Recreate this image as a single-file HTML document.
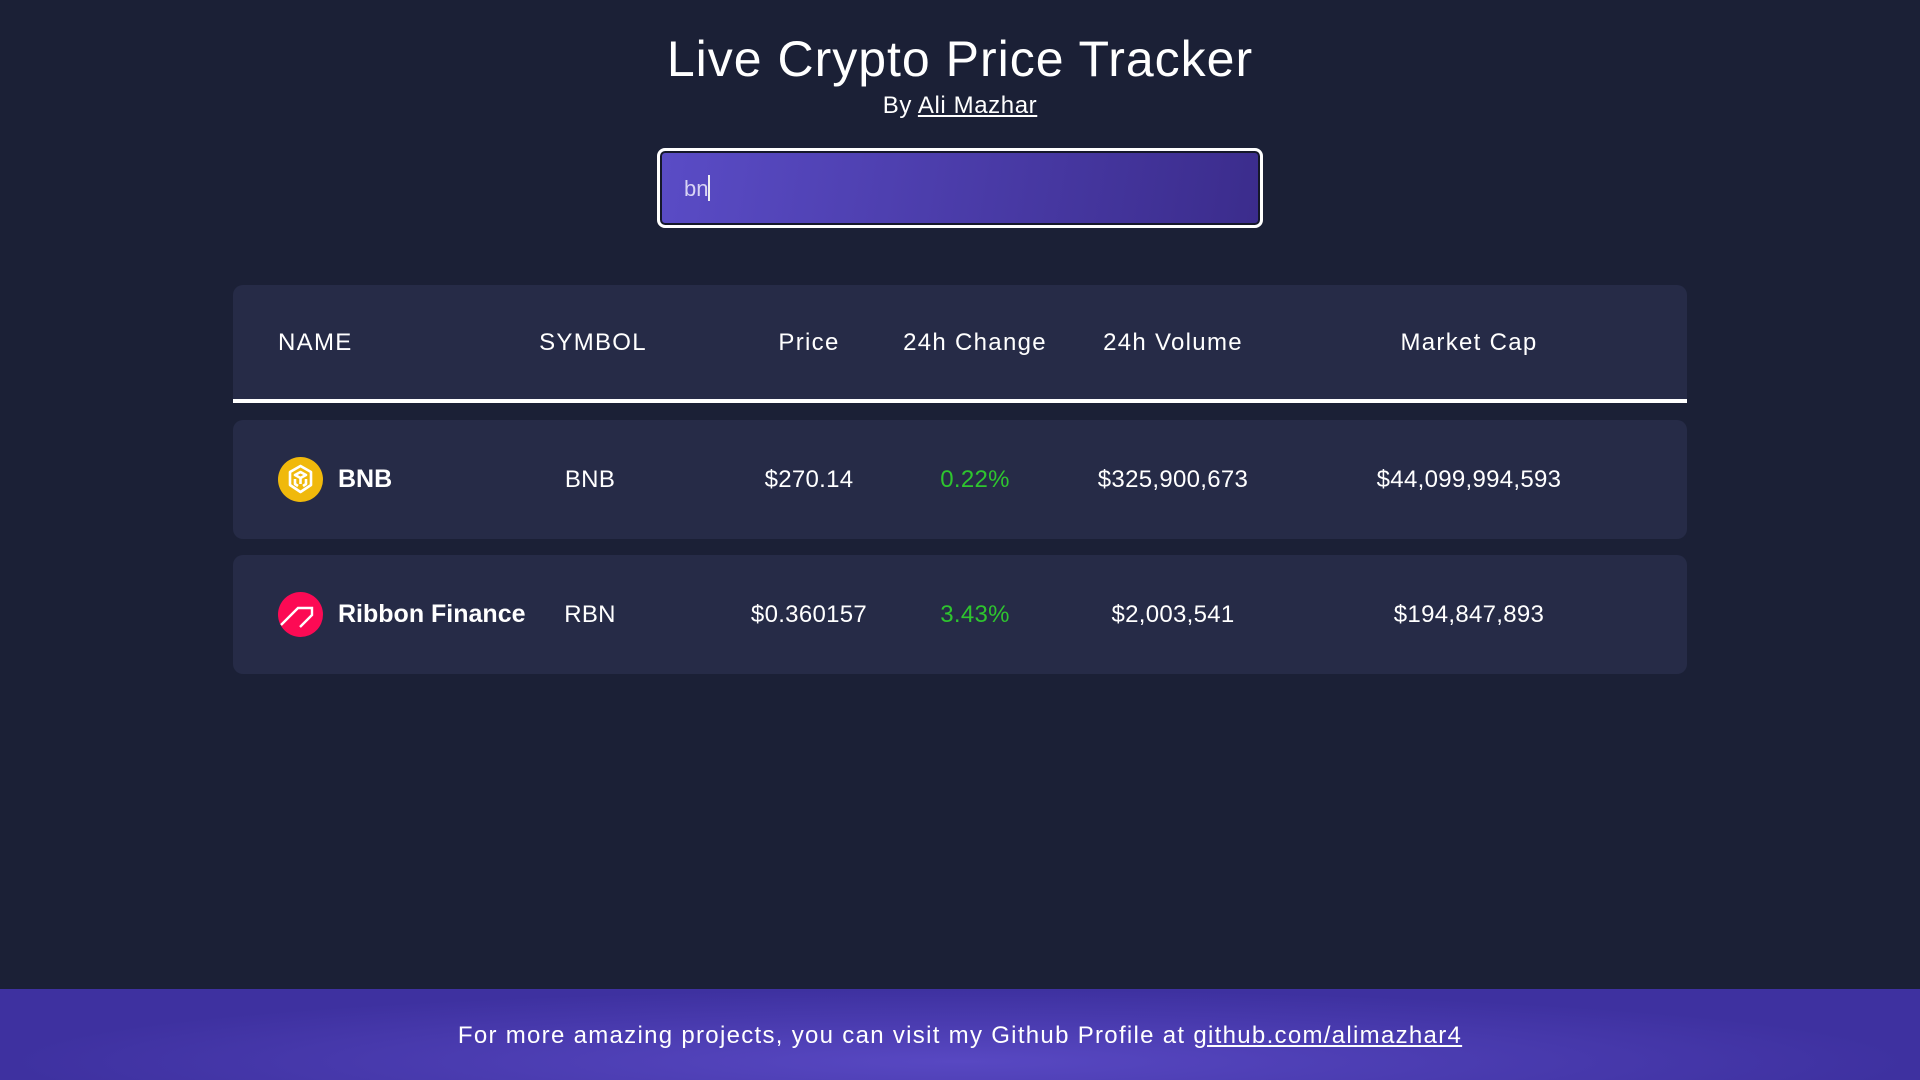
<!DOCTYPE html>
<html><head><meta charset="utf-8"><style>
*{margin:0;padding:0;box-sizing:border-box}
body{width:1920px;height:1080px;background:#1b2036;color:#fff;font-family:"Liberation Sans",sans-serif;position:relative;overflow:hidden}
h1{position:absolute;top:30px;width:100%;text-align:center;font-size:50px;font-weight:400;letter-spacing:1px}
.by{position:absolute;top:92px;width:100%;text-align:center;font-size:24px;letter-spacing:0.6px}
.by u{text-decoration:underline}
.inp{position:absolute;left:657px;top:148px;width:606px;height:80px;border:3px solid #fff;border-radius:8px;box-shadow:inset 0 0 0 2px #15182a;background:linear-gradient(100deg,#5a4cc6,#3b2c8c);}
.inp span{position:absolute;left:24px;top:24px;font-size:22px;color:#d8d4f4}
.inp span::after{content:"";display:inline-block;width:2px;height:26px;background:#eee;vertical-align:-5px}
.hdr{position:absolute;left:233px;top:285px;width:1454px;height:118px;background:#262b47;border-radius:10px 10px 0 0;border-bottom:4px solid #fff}
.row{position:absolute;left:233px;width:1454px;height:119px;background:#262b47;border-radius:10px}
.c{position:absolute;font-size:24px;white-space:nowrap;transform:translateX(-50%)}
.hdr .c{top:44px;letter-spacing:1.3px}
.row .c{top:46px;letter-spacing:0.3px}
.nm{position:absolute;left:105px;top:45px;font-size:25px;font-weight:700}
.ic{position:absolute;left:45px;top:37px;width:45px;height:45px;border-radius:50%}
.g{color:#2ec52e}
.foot{position:absolute;left:0;top:989px;width:1920px;height:91px;background:radial-gradient(ellipse at 50% 80%,#5848c2,#3e31a0 70%);text-align:center;font-size:24px;padding-top:33px;letter-spacing:1.3px}
</style></head><body>
<h1>Live Crypto Price Tracker</h1>
<div class="by">By <u>Ali Mazhar</u></div>
<div class="inp"><span>bn</span></div>
<div class="hdr">
<div class="c" style="left:45px;transform:none">NAME</div>
<div class="c" style="left:360px">SYMBOL</div>
<div class="c" style="left:576px">Price</div>
<div class="c" style="left:742px">24h Change</div>
<div class="c" style="left:940px">24h Volume</div>
<div class="c" style="left:1236px">Market Cap</div>
</div>
<div class="row" style="top:420px">
<div class="ic" style="background:#f0b90b"><svg width="45" height="45" viewBox="0 0 45 45" fill="none" stroke="#fff" stroke-width="2.6" stroke-linejoin="round"><path d="M22.5 9 L33 15 V28 L22.5 35 L12 28 V15 Z"/><path d="M17 18 L22.5 15 L28 18 L22.5 21 Z"/><path d="M22.5 21 V27 M17 22 V27 L20 29 M28 22 V27 L25 29"/></svg></div>
<div class="nm">BNB</div>
<div class="c" style="left:357px">BNB</div>
<div class="c" style="left:576px">$270.14</div>
<div class="c g" style="left:742px">0.22%</div>
<div class="c" style="left:940px">$325,900,673</div>
<div class="c" style="left:1236px">$44,099,994,593</div>
</div>
<div class="row" style="top:555px">
<div class="ic" style="background:#fc0a54"><svg width="45" height="45" viewBox="0 0 45 45" fill="none" stroke="#fff" stroke-width="2.4"><path d="M3 33 L20 16 L34 16 L34 23 L22 35"/></svg></div>
<div class="nm">Ribbon Finance</div>
<div class="c" style="left:357px">RBN</div>
<div class="c" style="left:576px">$0.360157</div>
<div class="c g" style="left:742px">3.43%</div>
<div class="c" style="left:940px">$2,003,541</div>
<div class="c" style="left:1236px">$194,847,893</div>
</div>
<div class="foot">For more amazing projects, you can visit my Github Profile at <u>github.com/alimazhar4</u></div>
</body></html>
